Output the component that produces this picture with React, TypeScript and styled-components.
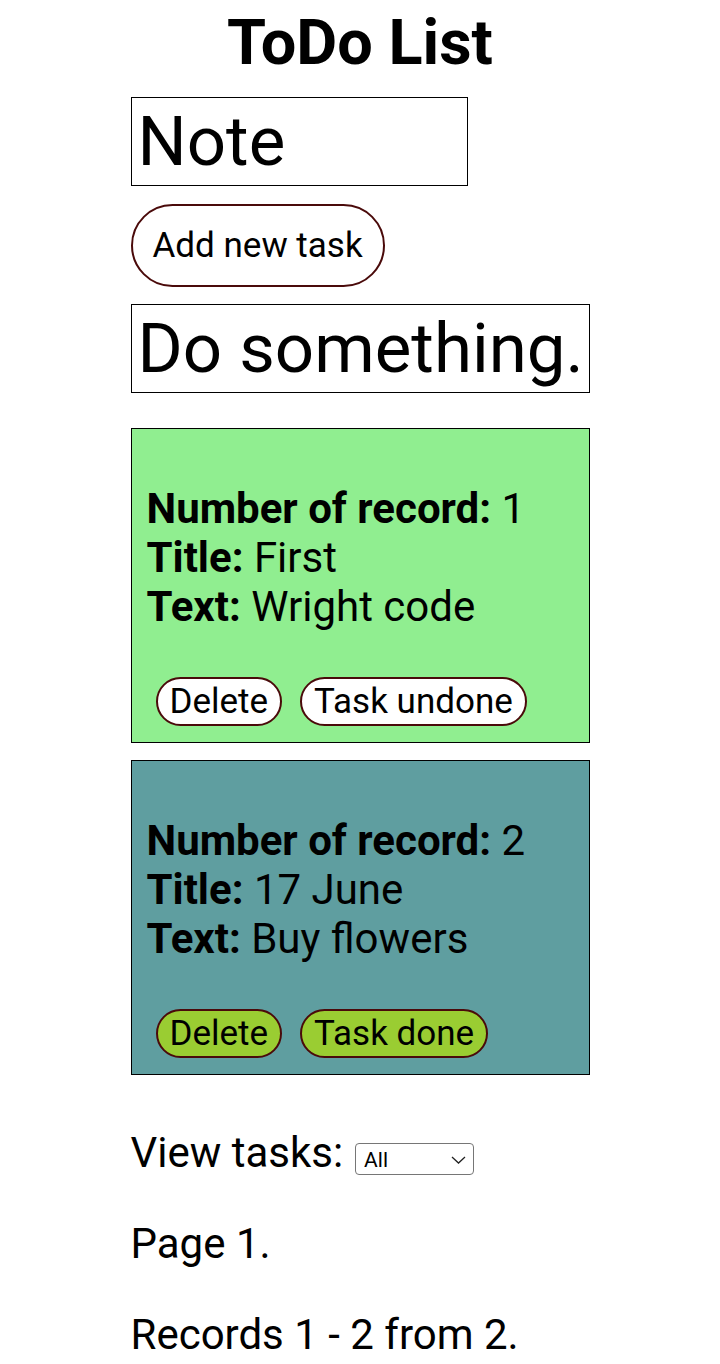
import React, { useState } from 'react'
import styled, { createGlobalStyle } from 'styled-components'

interface Task {
    id: number,
    title: string,
    text: string,
    done: boolean,
}

const GlobalStyle = createGlobalStyle`
    body {
        margin: 0;
        font-family: Roboto, "Liberation Sans", sans-serif;
        color: #000;
        background: #fff;
    }
`

const Container = styled.div`
    width: 459px;
    margin: 0 auto;
    display: flex;
    flex-direction: column;
    align-items: flex-start;
`

const Title = styled.h1`
    align-self: stretch;
    margin: 6px 0 0;
    font-size: 63px;
    font-weight: 700;
    text-align: center;
`

const BigInput = styled.input<{ $wide?: boolean }>`
    box-sizing: border-box;
    width: ${props => props.$wide ? '459px' : '337px'};
    height: 89px;
    margin-top: ${props => props.$wide ? '17px' : '18px'};
    padding: 0 6px;
    border: 1px solid #000;
    font-family: Roboto, sans-serif;
    font-size: 69px;
    color: #000;
    outline: none;
`

const AddButton = styled.button`
    box-sizing: border-box;
    height: 83px;
    margin-top: 18px;
    padding: 0 20px;
    border: 2px solid #4a0a0a;
    border-radius: 42px;
    background: #fff;
    font-family: Roboto, sans-serif;
    font-size: 35px;
    color: #000;
`

const Card = styled.div<{ $done: boolean, $first: boolean }>`
    box-sizing: border-box;
    width: 459px;
    height: 315px;
    margin-top: ${props => props.$first ? '35px' : '17px'};
    padding: 15px 15px 0;
    border: 1px solid #000;
    background: ${props => props.$done ? '#90ee90' : '#5f9ea0'};
`

const Info = styled.div`
    margin-top: 40px;
    font-size: 42px;
    line-height: 49.2px;

    b {
        font-weight: 700;
    }
`

const ButtonRow = styled.div`
    display: flex;
    align-items: flex-start;
    gap: 18px;
    margin-top: 45px;
    padding-left: 9px;
`

const CardButton = styled.button<{ $done: boolean }>`
    box-sizing: border-box;
    flex: none;
    height: 49px;
    padding: 0 12px;
    border: 2px solid #4a0a0a;
    border-radius: 25px;
    background: ${props => props.$done ? '#fff' : '#9acd32'};
    font-family: Roboto, sans-serif;
    font-size: 35px;
    line-height: 43px;
    color: #000;
`

const Line = styled.p<{ $gap: number }>`
    margin: ${props => props.$gap}px 0 0;
    font-size: 42px;
`

const SelectWrap = styled.span`
    position: relative;
    display: inline-flex;
    align-items: center;
    margin-left: 12px;
`

const Filter = styled.select`
    appearance: none;
    box-sizing: border-box;
    width: 119px;
    height: 32px;
    padding: 2px 0 0 8px;
    font-family: Roboto, sans-serif;
    font-size: 21px;
    line-height: 28px;
    color: #000;
    border: 1px solid #767676;
    border-radius: 4px;
    background: #fff;
`

const Chevron = styled.svg`
    position: absolute;
    right: 8px;
    top: 13px;
    pointer-events: none;
`

const initialTasks: Task[] = [
    { id: 1, title: 'First', text: 'Wright code', done: true },
    { id: 2, title: '17 June', text: 'Buy flowers', done: false },
]

export default function App() {
    const [tasks, setTasks] = useState<Task[]>(initialTasks)
    const [title, setTitle] = useState('Note')
    const [text, setText] = useState('Do something.')

    const toggle = (id: number) =>
        setTasks(tasks.map(t => t.id === id ? { ...t, done: !t.done } : t))
    const remove = (id: number) => setTasks(tasks.filter(t => t.id !== id))

    return (
        <>
            <GlobalStyle />
            <Container>
                <Title>ToDo List</Title>
                <BigInput value={title} onChange={e => setTitle(e.target.value)} />
                <AddButton>Add new task</AddButton>
                <BigInput $wide value={text} onChange={e => setText(e.target.value)} />
                {tasks.map((t, i) => (
                    <Card key={t.id} $done={t.done} $first={i === 0}>
                        <Info>
                            <b>Number of record:</b> {t.id}<br />
                            <b>Title:</b> {t.title}<br />
                            <b>Text:</b> {t.text}
                        </Info>
                        <ButtonRow>
                            <CardButton $done={t.done} onClick={() => remove(t.id)}>Delete</CardButton>
                            <CardButton $done={t.done} onClick={() => toggle(t.id)}>
                                {t.done ? 'Task undone' : 'Task done'}
                            </CardButton>
                        </ButtonRow>
                    </Card>
                ))}
                <Line $gap={53}>
                    View tasks:
                    <SelectWrap>
                        <Filter defaultValue="all">
                            <option value="all">All</option>
                            <option value="done">Done</option>
                            <option value="undone">Undone</option>
                        </Filter>
                        <Chevron width="15" height="8" viewBox="0 0 15 8">
                            <path d="M1 1l6.5 6L14 1" fill="none" stroke="#222" strokeWidth="1.3" />
                        </Chevron>
                    </SelectWrap>
                </Line>
                <Line $gap={42}>Page 1.</Line>
                <Line $gap={42}>Records 1 - 2 from 2.</Line>
            </Container>
        </>
    )
}
